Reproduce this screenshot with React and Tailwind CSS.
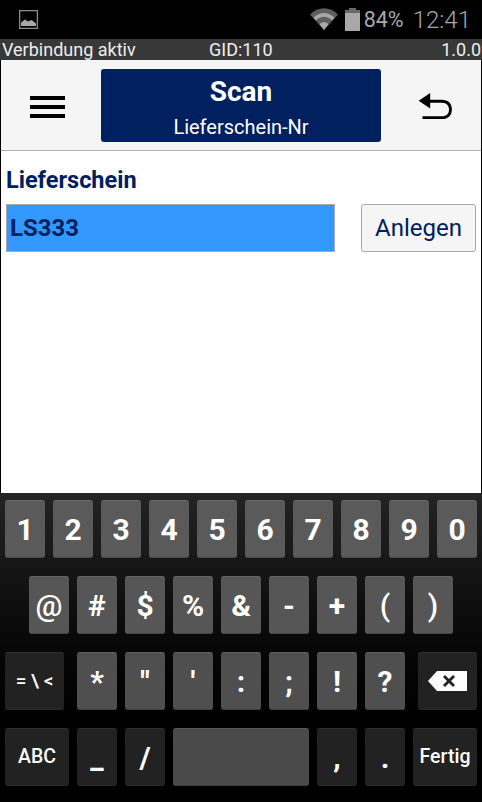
import React from "react";

const F = { fontFamily: "Roboto, sans-serif" };

function Key({ children, w = "w-[40px]", dark = false, size = "text-[30px]", row = 0, weight = "font-bold" }) {
  const tone = dark
    ? "bg-[#222222] border-t-[#303030] border-b-[#2a2a2a]"
    : row === 0
    ? "bg-[#5a5a5a] border-t-[#6a6a6a] border-b-[#4a4a4a]"
    : row === 1
    ? "bg-[#565656] border-t-[#666666] border-b-[#464646]"
    : row === 2
    ? "bg-[#4f4f4f] border-t-[#5f5f5f] border-b-[#414141]"
    : "bg-[#4a4a4a] border-t-[#5a5a5a] border-b-[#3e3e3e]";
  return (
    <div
      className={`${w} h-[58px] shrink-0 rounded-[3px] border-t border-b flex items-center justify-center text-white ${weight} ${tone} ${size}`}
    >
      {children}
    </div>
  );
}

const Row = ({ children, className = "" }) => (
  <div className={`flex h-[58px] gap-2 ${className}`}>{children}</div>
);

export default function App() {
  return (
    <div className="w-[482px] h-[802px] flex flex-col overflow-hidden bg-white" style={F}>
      {/* status bar */}
      <div className="h-[39px] bg-black flex items-center pl-[19px] pr-[11px] text-[#a8a8a8]">
        <svg width="19" height="19" viewBox="0 0 19 19">
          <rect x="0.5" y="0.5" width="18" height="18" fill="none" stroke="#8e8e8e" strokeWidth="1.5" />
          <path d="M2 16 V12.5 L6 9.5 L9 11.5 L12.5 10 L17 13.5 V16 Z" fill="#a8a8a8" />
        </svg>
        <div className="flex-1" />
        <svg width="28" height="23" viewBox="0 0 28 23" className="mr-[7px]">
          <path d="M0 6.5 C8 -2 20 -2 28 6.5 L14 22 Z" fill="#5e5e5e" />
          <path d="M6 12.5 C11 7.5 17 7.5 22 12.5 L24.5 9.7 C18 3.5 10 3.5 3.5 9.7 Z" fill="#a8a8a8" />
          <path d="M9.5 16.3 C12 13.7 16 13.7 18.5 16.3 L14 22 Z" fill="#a8a8a8" />
        </svg>
        <svg width="15" height="23" viewBox="0 0 15 23" className="mr-[4px]">
          <rect x="4" y="0" width="7" height="3" fill="#6a6a6a" />
          <rect x="0" y="2" width="15" height="3" fill="#6a6a6a" />
          <rect x="0" y="5" width="15" height="18" fill="#a8a8a8" />
        </svg>
        <span className="text-[21.5px] leading-none w-[49px]">84%</span>
        <span className="text-[24px] leading-none font-light">12:41</span>
      </div>

      {/* info bar */}
      <div className="h-[21px] bg-[#383838] flex items-center justify-between pl-[2px] pr-[1px] text-[18px] leading-none text-[#eeeeee] relative">
        <span>Verbindung aktiv</span>
        <span className="absolute left-[209px]">GID:110</span>
        <span>1.0.0</span>
      </div>

      {/* main */}
      <div className="flex-1 flex flex-col border-x border-black bg-white">
        <div className="h-[91px] bg-[#f5f5f5] border-b border-[#b0b0b0] flex items-start pt-[9px]">
          <div className="w-[100px] h-[73px] flex items-center justify-center">
            <div className="w-[35px] flex flex-col gap-[5px] ml-[-8px] mt-[3px]">
              <div className="h-[4px] bg-black" />
              <div className="h-[4px] bg-black" />
              <div className="h-[4px] bg-black" />
            </div>
          </div>
          <div className="w-[280px] h-[73px] bg-[#00205f] rounded-[3px] flex flex-col items-center text-white">
            <span className="text-[28px] leading-[30px] font-bold mt-[8px]">Scan</span>
            <span className="text-[20px] leading-[24px] mt-[8px]">Lieferschein-Nr</span>
          </div>
          <div className="flex-1 h-[73px] flex items-center justify-center">
            <svg width="35" height="27" viewBox="0 0 35 28" className="ml-[8px] mt-[2px]">
              <path d="M12 0 L0 8 L12 16 L12 10 L24 10 C29 10 31.5 13 31.5 17 C31.5 21.5 29 24 24 24 L4 24 L4 27 L24 27 C31 27 34.5 23 34.5 17 C34.5 11 31 7 24 7 L12 7 Z" fill="#000" />
            </svg>
          </div>
        </div>

        <div className="px-[5px] pt-[14px]">
          <div className="text-[23.5px] leading-[30px] font-bold text-[#00205f]">Lieferschein</div>
          <div className="flex justify-between mt-[9px]">
            <div className="w-[329px] h-[48px] bg-[#3399ff] border border-[#a8a8a8] flex items-center pl-[3px] text-[24px] font-bold text-[#00205f]">
              LS333
            </div>
            <div className="w-[115px] h-[48px] bg-[#f5f5f5] border border-[#a8a8a8] rounded-[3px] flex items-center justify-center text-[24px] text-[#00205f]">
              Anlegen
            </div>
          </div>
        </div>
      </div>

      {/* keyboard */}
      <div className="h-[309px] pt-[7px] flex flex-col gap-[18px] bg-gradient-to-b from-[#242424] to-[#000000]">
        <Row className="justify-center">
          {["1", "2", "3", "4", "5", "6", "7", "8", "9", "0"].map((k) => (
            <Key key={k} row={0}>{k}</Key>
          ))}
        </Row>
        <Row className="justify-center">
          {["@", "#", "$", "%", "&", "-", "+", "(", ")"].map((k) => (
            <Key key={k} row={1} weight={k === "@" || k === "(" || k === ")" ? "font-medium" : "font-bold"}>{k}</Key>
          ))}
        </Row>
        <Row className="px-[5px] justify-between">
          <Key w="w-[59px]" dark size="text-[19px]" weight="font-medium">= \ &lt;</Key>
          <div className="flex gap-2">
            {["*", '"', "'", ":", ";", "!", "?"].map((k) => (
              <Key key={k} row={2}>{k}</Key>
            ))}
          </div>
          <Key w="w-[59px]" dark>
            <svg width="39" height="20" viewBox="0 0 39 20">
              <path fillRule="evenodd" d="M9 0 H39 V20 H9 L0 10 Z M17 4 L15 6 L19 10 L15 14 L17 16 L21 12 L25 16 L27 14 L23 10 L27 6 L25 4 L21 8 Z" fill="#fff" />
            </svg>
          </Key>
        </Row>
        <Row className="px-[5px]">
          <Key w="w-[64px]" dark size="text-[19.5px]" weight="font-medium">ABC</Key>
          <Key dark>_</Key>
          <Key dark>/</Key>
          <Key w="w-[136px]" row={3}>{""}</Key>
          <Key dark>,</Key>
          <Key dark>.</Key>
          <Key w="w-[64px]" dark size="text-[19.5px]" weight="font-medium">Fertig</Key>
        </Row>
      </div>
    </div>
  );
}
